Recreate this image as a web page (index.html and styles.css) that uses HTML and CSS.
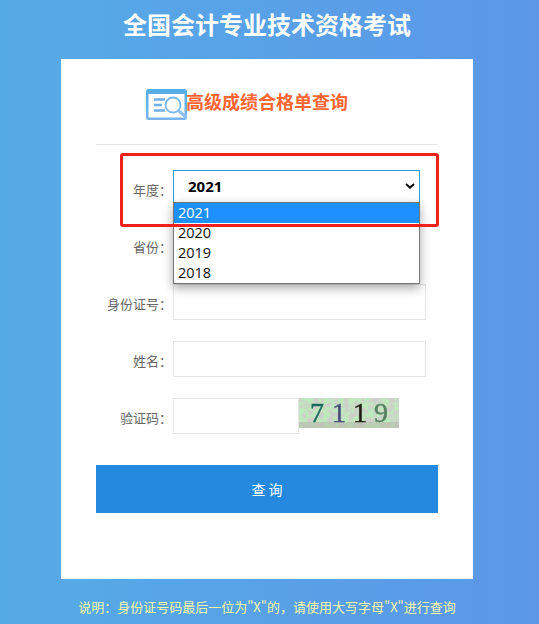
FILE: index.html
```html
<!DOCTYPE html>
<html lang="zh-CN">
<head>
  <meta charset="UTF-8">
  <meta name="viewport" content="width=device-width, initial-scale=1.0">
  <title>全国会计专业技术资格考试</title>
  <link rel="stylesheet" href="styles.css">
</head>
<body>

  <h1 class="page-title">全国会计专业技术资格考试</h1>

  <div class="card">
    <div class="card-head">
      <svg class="head-icon" width="44" height="32" viewBox="0 0 44 32">
        <defs>
          <linearGradient id="iconFill" x1="0" y1="0" x2="0" y2="1">
            <stop offset="0" stop-color="#55aee6"/>
            <stop offset="1" stop-color="#78b4f0"/>
          </linearGradient>
        </defs>
        <rect x="0" y="0" width="41" height="31" rx="2.5" fill="url(#iconFill)"/>
        <rect x="2.5" y="5" width="36" height="23.5" fill="#fff"/>
        <path d="M8 10.5h11M8 16h8M8 21.5h11" stroke="#6fb0ea" stroke-width="2.4" fill="none"/>
        <circle cx="27" cy="16" r="7.5" fill="#fff" stroke="#78b6ee" stroke-width="1.8"/>
        <path d="M32.5 21.5l8 7" stroke="#8fc0f0" stroke-width="3" fill="none"/>
      </svg>
      <h2 class="head-text">高级成绩合格单查询</h2>
    </div>

    <form class="query-form">
      <div class="form-row">
        <label class="form-label">年度：</label>
        <div class="select-wrap">
          <select class="year-select">
            <option>2021</option>
            <option>2020</option>
            <option>2019</option>
            <option>2018</option>
          </select>
          <svg class="select-arrow" width="10" height="6" viewBox="0 0 10 6">
            <path d="M1 1l4 3.6L9 1" stroke="#111" stroke-width="2" fill="none"/>
          </svg>
        </div>
      </div>
      <div class="form-row">
        <label class="form-label">省份：</label>
      </div>
      <div class="form-row">
        <label class="form-label">身份证号：</label>
        <input class="form-input" type="text">
      </div>
      <div class="form-row">
        <label class="form-label">姓名：</label>
        <input class="form-input" type="text">
      </div>
      <div class="form-row">
        <label class="form-label">验证码：</label>
        <input class="form-input code-input" type="text">
        <svg class="captcha" width="100" height="30" viewBox="0 0 100 30">
          <defs>
            <filter id="mottle" x="0" y="0" width="100%" height="100%">
              <feTurbulence type="fractalNoise" baseFrequency="0.2" numOctaves="2" seed="4"/>
              <feColorMatrix type="matrix" values="0 0 0 0 0.62  0 0 0 0 0.64  0 0 0 0 0.58  5 0 0 0 -2"/>
            </filter>
            <filter id="soften">
              <feGaussianBlur stdDeviation="0.5"/>
            </filter>
          </defs>
          <rect width="100" height="30" fill="#bdeabd"/>
          <rect width="100" height="30" filter="url(#mottle)"/>
          <rect y="24" width="100" height="6" fill="#b5b8a8" opacity="0.55"/>
          <g filter="url(#soften)">
            <text class="captcha-digit" x="11" y="24" fill="#1f6a60" stroke="#1f6a60">7</text>
            <text class="captcha-digit" x="33" y="24" fill="#48507a" stroke="#48507a">1</text>
            <text class="captcha-digit" x="54" y="24" fill="#241f14" stroke="#241f14">1</text>
            <text class="captcha-digit" x="75" y="24" fill="#55805f" stroke="#55805f">9</text>
          </g>
        </svg>
      </div>
      <button class="submit-btn" type="button">查 询</button>
    </form>

    <!-- open year dropdown -->
    <div class="year-popup">
      <div class="year-option selected">2021</div>
      <div class="year-option">2020</div>
      <div class="year-option">2019</div>
      <div class="year-option">2018</div>
    </div>

    <!-- red annotation box -->
    <div class="mark-box"></div>
  </div>

  <p class="note">说明：身份证号码最后一位为"X"的，请使用大写字母"X"进行查询</p>

</body>
</html>
```

FILE: styles.css
```css
html, body {
  height: 100%;
}

body {
  margin: 0;
  height: 624px;
  overflow: hidden;
  font-family: "Noto Sans CJK SC", "Noto Sans", sans-serif;
  background: linear-gradient(90deg, #55abe6, #5c97e8);
}

.page-title {
  margin: 0;
  height: 59px;
  padding-right: 5px;
  line-height: 48px;
  font-size: 24px;
  font-weight: bold;
  color: #fff;
  text-align: center;
}

.card {
  position: relative;
  box-sizing: border-box;
  width: 412px;
  height: 520px;
  margin-left: 61px;
  padding: 0 35px;
  background-color: #fff;
}

.card-head {
  display: flex;
  align-items: flex-start;
  height: 86px;
  padding: 30px 0 0 50px;
  box-sizing: border-box;
  border-bottom: 1px solid #e6e6e6;
}

.head-icon {
  flex: none;
}

.head-text {
  margin: -1px 0 0 -4px;
  font-size: 18px;
  line-height: 26px;
  font-weight: bold;
  color: #ff6633;
}

.query-form {
  padding-top: 25px;
}

.form-row {
  display: flex;
  align-items: flex-start;
  height: 36px;
  margin-bottom: 21px;
}

.form-label {
  flex: none;
  box-sizing: border-box;
  width: 77px;
  padding: 10px 1px 0 0;
  font-size: 13px;
  line-height: 20px;
  color: #666;
  text-align: right;
  white-space: nowrap;
}

.select-wrap {
  position: relative;
  width: 247px;
}

.year-select {
  box-sizing: border-box;
  display: block;
  width: 100%;
  height: 33px;
  padding: 0 0 2px 14px;
  font-family: "Open Sans", sans-serif;
  font-size: 15px;
  font-weight: bold;
  color: #000;
  background-color: #fff;
  border: 1px solid #2f9ae0;
  border-radius: 0;
  outline: none;
  appearance: none;
}

.select-arrow {
  position: absolute;
  top: 13px;
  right: 5px;
}

.form-input {
  box-sizing: border-box;
  width: 253px;
  height: 36px;
  background-color: #fff;
  border: 1px solid #e6e6e6;
  outline: none;
}

.code-input {
  width: 126px;
}

.captcha {
  flex: none;
}

.captcha-digit {
  font-family: "Liberation Serif", serif;
  font-size: 28px;
  stroke-width: 0.5px;
}

.submit-btn {
  display: block;
  width: 342px;
  height: 48px;
  margin-top: 31px;
  font-family: "Noto Sans CJK SC", sans-serif;
  font-size: 14px;
  color: #fff;
  background-color: #2589e0;
  border: none;
}

.year-popup {
  position: absolute;
  top: 143px;
  left: 112px;
  box-sizing: border-box;
  width: 247px;
  height: 82px;
  background-color: #fff;
  border: 1px solid #767676;
  box-shadow: 0 4px 10px rgba(0, 0, 0, 0.35);
}

.year-option {
  height: 20px;
  padding-left: 4px;
  font-family: "Open Sans", sans-serif;
  font-size: 14.5px;
  line-height: 20px;
  color: #111;
}

.year-option.selected {
  color: #fff;
  background-color: #1e90ff;
}

.mark-box {
  position: absolute;
  top: 94px;
  left: 59px;
  box-sizing: border-box;
  width: 319px;
  height: 74px;
  border: 3px solid #f0201a;
  border-radius: 3px;
}

.note {
  margin: 19px 0 0;
  padding-right: 5px;
  font-size: 13px;
  line-height: 18px;
  color: #f4f5a6;
  text-align: center;
}
```
